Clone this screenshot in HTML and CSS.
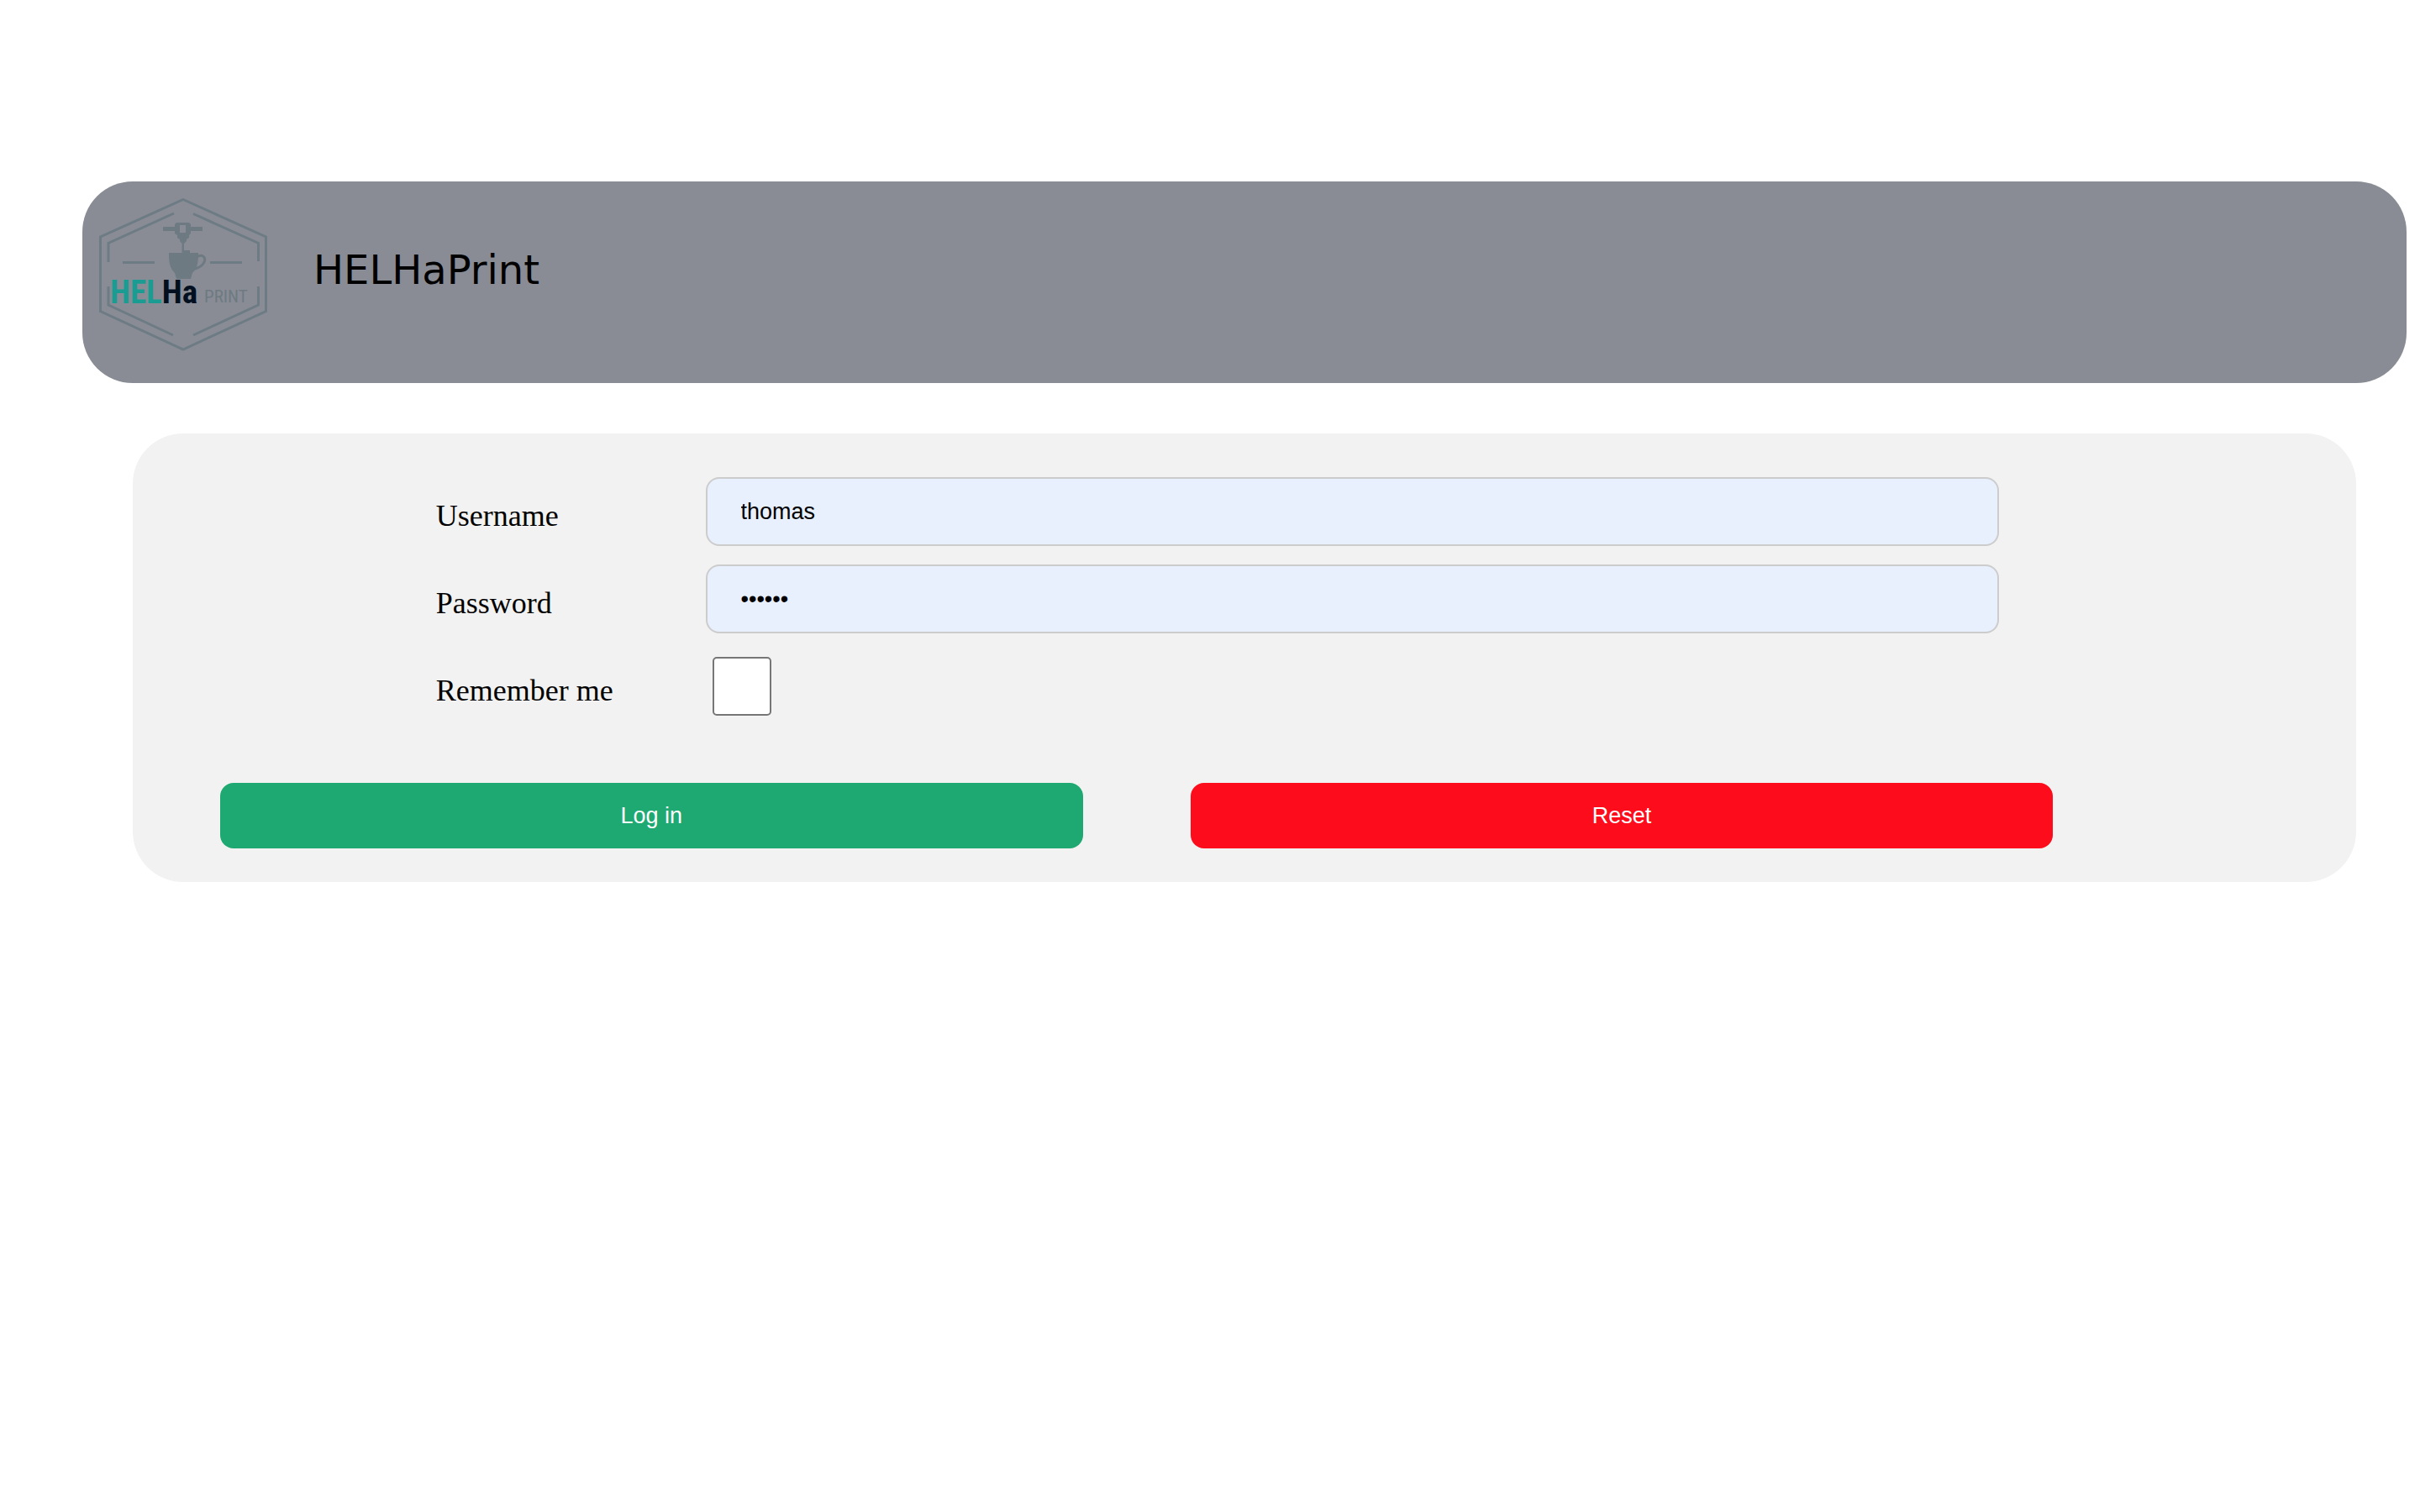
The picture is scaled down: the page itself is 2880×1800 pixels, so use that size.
FILE: index.html
```html
<!DOCTYPE html>
<html lang="en">
	<head>
		<meta charset="UTF-8">
		<meta name="viewport" content="width=device-width, initial-scale=1">
		<title>HELHaPrint</title>
		<link rel="stylesheet" href="styles.css">
	</head>
	<body>
		<header class="header">
			<svg class="logo" viewBox="0 0 200 182" role="img" aria-label="HELHa Print">
				<!-- hexagon -->
				<g class="line">
					<path d="M100 1.500 L198.500 46 V134.500 L100 180 L1.500 134.500 V46 Z"/>
					<path d="M89 18 L11 53.500 V76 M11 105 V127 L88 163"/>
					<path d="M112 18.500 L189.500 53.500 V75 M189.500 105 V127 L112 163"/>
					<path d="M28 76.500 H66 M132 76.500 H170"/>
				</g>
				<!-- printer head and cup -->
				<g class="shape">
					<path d="M76 34 H90 V31 L92 29 H107 L109 31 V34 H123 V39 H109 V42 L107 44 V47 L104 49 V51 L101 54 V62 H108 V65 H98.500 V54 L96 51 V49 L93 47 V44 L90 42 V39 H76 Z M96 32 V41 H103 V32 Z" fill-rule="evenodd"/>
					<path d="M83 65 H118 C118 77 117 83 111 89 L109 96 H92 L90 89 C84 83 83 77 83 65 Z"/>
				</g>
				<path class="handle" d="M117 69.500 C124 66 127 71 125 76 C123 81 118 83 113 84.500"/>
				<text x="13" y="125" class="brand"><tspan class="green">HEL</tspan><tspan class="dark">Ha</tspan></text>
				<text x="125" y="124" class="print">PRINT</text>
			</svg>
			<h1 class="title">HELHaPrint</h1>
		</header>
		<form class="login">
			<div class="row">
				<label for="username">Username</label>
				<input type="text" id="username" name="username" value="thomas">
			</div>
			<div class="row">
				<label for="password">Password</label>
				<input type="password" id="password" name="password" value="thomas">
			</div>
			<div class="row">
				<label for="remember">Remember me</label>
				<input type="checkbox" id="remember" name="remember">
			</div>
			<div class="buttons">
				<button type="submit" class="submit">Log in</button>
				<button type="reset" class="reset">Reset</button>
			</div>
		</form>
	</body>
</html>
```
FILE: styles.css
```css
* {
	box-sizing: border-box;
}
body {
	margin: 216px 16px 16px 98px;
	background: #fff;
	font-family: "Liberation Serif", "Times New Roman", serif;
	font-size: 36px;
}
.header {
	display: flex;
	align-items: flex-start;
	gap: 55px;
	min-height: 240px;
	padding: 20px;
	border-radius: 60px;
	background: #898c95;
}
.logo {
	width: 200px;
	flex: none;
}
.line {
	fill: none;
	stroke: #6d7c84;
	stroke-width: 3;
}
.shape {
	fill: #6d7a82;
}
.handle {
	fill: none;
	stroke: #6d7a82;
	stroke-width: 3;
}
.brand {
	font-family: "Roboto Condensed", "Liberation Sans Narrow", sans-serif;
	font-size: 39px;
	font-weight: bold;
}
.green {
	fill: #1b9c93;
}
.dark {
	fill: #020f20;
}
.print {
	font-family: "Roboto Condensed", "Liberation Sans Narrow", sans-serif;
	font-size: 21px;
	fill: #6d7a82;
}
.title {
	margin: 57px 0 0;
	font-family: "DejaVu Sans", Verdana, sans-serif;
	font-size: 48px;
	font-weight: normal;
	line-height: 56px;
}
.login {
	margin: 60px;
	padding: 52px 40px 40px;
	border-radius: 60px;
	background: #f2f2f2;
}
.row {
	display: grid;
	grid-template-columns: 25% 60%;
	align-items: center;
	min-height: 82px;
	margin-bottom: 22px;
}
.row label {
	padding: 10px 0 0 50%;
	line-height: 40px;
	white-space: nowrap;
}
.row input[type=text],
.row input[type=password] {
	width: 100%;
	height: 82px;
	padding: 24px 40px;
	border: 2px solid #ccc;
	border-radius: 16px;
	background: #e8effd;
	color: #000;
	font-family: "Liberation Sans", Arial, sans-serif;
	font-size: 27px;
}
.row input[type=checkbox] {
	appearance: none;
	width: 70px;
	height: 70px;
	margin: 0 8px;
	border: 2px solid #767676;
	border-radius: 5px;
	background: #fff;
}
.row input[type=checkbox]:checked {
	background: #0075ff;
}
.buttons {
	display: flex;
	margin-top: 74px;
}
.buttons button {
	width: 40%;
	height: 78px;
	margin: 0 2.5%;
	border: none;
	border-radius: 16px;
	color: #fff;
	font-family: "Liberation Sans", Arial, sans-serif;
	font-size: 27px;
	cursor: pointer;
}
.buttons .submit {
	background: #1da971;
}
.buttons .reset {
	background: #fd0d1b;
}
```
